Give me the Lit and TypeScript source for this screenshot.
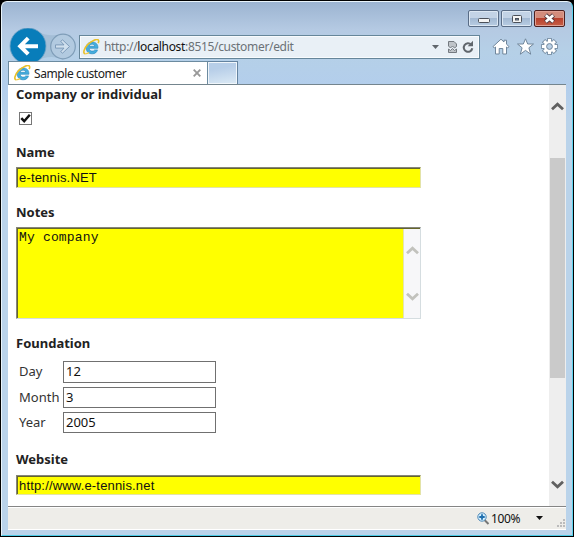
import { LitElement, html, css, svg } from "lit";
import { customElement } from "lit/decorators.js";

const ieLogo = html`<svg class="ie" width="17" height="16" viewBox="0 0 17 16">
  <path d="M14.900 9.300H6.200c.2 2 1.500 2.800 3 2.800 1.200 0 1.900-.4 2.400-1.200h2.900c-.7 2.600-2.700 3.900-5.300 3.900-3.500 0-6-2.200-6-5.900 0-3.600 2.600-6 6-6 3.500 0 6.100 2.400 5.700 6.400zM6.300 7.300h5.300C11.500 5.800 10.400 5.200 9 5.200S6.500 5.900 6.300 7.300z" fill="#45addd" stroke="#2384ba" stroke-width=".6"/>
  <path d="M2.300 14.700C-.4 14.800.8 9.600 4.600 5.600 8.600 1.500 14.300-.7 15.400 1.200c.5.800.3 1.900-.3 3" fill="none" stroke="#e8c02a" stroke-width="1.600"/>
  <path d="M2.300 14.600c1 .3 2.600-.2 3.900-1.100" fill="none" stroke="#f0cb45" stroke-width="1.300"/>
</svg>`;

const chevron = (up: boolean, color: string) => html`<svg width="13" height="9" viewBox="0 0 13 9">
  <path d=${up ? "M1 7.300 6.500 2.200 12 7.300" : "M1 1.700 6.500 6.800 12 1.700"} fill="none" stroke=${color} stroke-width="2.800"/>
</svg>`;

const teeth = [0, 45, 90, 135, 180, 225, 270, 315].map(
  (a) => svg`<rect x="7" y=".9" width="3" height="4" transform="rotate(${a} 8.5 8.5)"/>`,
);

@customElement("app-root")
export class AppRoot extends LitElement {
  static styles = css`
    :host {
      display: block;
      width: 574px;
      height: 537px;
      background: #000;
      overflow: hidden;
      font-family: "Noto Sans", "Open Sans", sans-serif;
      font-size: 12px;
      color: #1b1b1b;
    }
    * { box-sizing: border-box; }
    svg { display: block; flex: none; }
    .window {
      margin: 1px 1px 0 1px;
      height: 535px;
      border: 1px solid #e9f4fb;
      border-right-color: #5cd3ee;
      border-bottom-color: #4bcbe6;
      border-radius: 6px 6px 0 0;
      padding: 0 6px;
      background: linear-gradient(#9cb4d1 0, #b5cae3 28px, #b5d0e7 50px, #b3ceec 84px, #bad3ea 120px, #bad3ea 100%);
      display: flex;
      flex-direction: column;
    }
    .caption { height: 32px; padding: 8px 1px 0 0; display: flex; justify-content: flex-end; gap: 2px; flex: none; }
    .cap {
      width: 31px;
      height: 17px;
      border: 1px solid #596c86;
      border-radius: 2px;
      box-shadow: inset 0 0 0 1px #dce7f3;
      background: linear-gradient(#c3d3e6 45%, #a3b9d3 50%, #b8cde3);
      display: flex;
      align-items: center;
      justify-content: center;
    }
    .cap.close { border-color: #4d2020; box-shadow: inset 0 0 0 1px #dfa093; background: linear-gradient(#d38c7c 45%, #b8402d 50%, #c75f47); }
    .nav { height: 25px; display: flex; align-items: center; flex: none; }
    .arrows { width: 71px; height: 38px; }
    .address {
      width: 401px;
      height: 24px;
      border: 1px solid #66869a;
      box-shadow: inset 0 0 0 1px #f8fbfd;
      background: #e9f0f6;
      display: flex;
      align-items: center;
      padding-left: 3px;
      font-size: 12px;
      color: #6c7277;
    }
    .url { margin-left: 4px; width: 328px; white-space: nowrap; letter-spacing: -0.33px; }
    .url b { font-weight: 400; color: #111; }
    .tools { display: flex; margin-left: 12px; gap: 7px; align-items: center; }
    .tabs { height: 26px; padding-top: 2px; display: flex; flex: none; border-bottom: 1px solid #74858e; }
    .tab {
      width: 200px;
      border: 1px solid #6c8ba0;
      border-bottom: 0;
      height: 23px;
      background: #fff;
      display: flex;
      align-items: center;
      padding: 0 6px 0 5px;
      font-size: 12px;
      color: #222;
    }
    .tab .title { flex: 1; margin-left: 3px; white-space: nowrap; letter-spacing: -0.4px; }
    .newtab { width: 30px; height: 23px; border: 1px solid #6483a0; border-left: 0; border-bottom: 0; box-shadow: inset 0 0 0 1px #f0f6fb; background: linear-gradient(170deg, #b7cee8 30%, #dceaf5); }
    .page { height: 421px; background: #fff; display: flex; justify-content: space-between; flex: none; overflow: hidden; }
    .form { padding-left: 8px; }
    h2 { margin: 0; height: 18px; line-height: 18px; font-size: 13px; font-weight: 700; color: #222; white-space: nowrap; }
    .check { width: 13px; height: 13px; border: 1px solid #777; margin: 9px 0 18px 3px; }
    .field {
      width: 405px;
      height: 21px;
      background: #ff0;
      border: 1px solid;
      border-color: #85857a #e3e3a8 #e3e3a8 #85857a;
      box-shadow: inset 1px 1px 0 #66662a;
      padding: 1px 0 0 2px;
      margin: 6px 0 15px;
      line-height: 18px;
      font-family: "Liberation Sans", Arial, sans-serif;
      font-size: 13px;
      letter-spacing: 0.17px;
      color: #111;
      white-space: nowrap;
    }
    .field.area { height: 92px; display: flex; justify-content: space-between; font: 13px/17px "Liberation Mono", "Courier New", monospace; border-right-color: #d5dde0; border-bottom-color: #d5dde0; }
    .inner-scroll { width: 17px; background: #f7f7f9; border-left: 1px solid #e4e4b0; display: flex; flex-direction: column; align-items: center; padding-top: 17px; gap: 37px; }
    .date { margin-top: 9px; margin-bottom: 17px; display: flex; flex-direction: column; gap: 4px; }
    .row { display: flex; padding-left: 3px; height: 21px; font-size: 13px; line-height: 21px; color: #333; }
    .row:first-child { height: 22px; }
    .label { width: 44px; flex: none; white-space: nowrap; }
    .value { width: 153px; border: 1px solid #707070; padding-left: 2px; line-height: 18px; font-size: 13px; color: #111; }
    .field.web { margin: 7px 0 0; height: 20px; }
    .scroll { width: 17px; background: #eeeeee; display: flex; flex-direction: column; align-items: center; padding: 17px 0; }
    .thumb { width: 15px; height: 220px; background: #cacaca; margin: 47px 0 102px; }
    .status { height: 24px; border-top: 1px solid #858585; border-bottom: 1px solid #fff; box-shadow: inset 0 1px #fff; background: #eeede9; display: flex; justify-content: flex-end; align-items: center; color: #111; font-size: 12px; }
    .zoom { width: 45px; margin-left: 1px; letter-spacing: -0.4px; }
  `;

  render() {
    return html`<div class="window">
      <div class="caption">
        <div class="cap"><svg width="12" height="10"><rect x=".5" y="4.500" width="11" height="4" rx="1" fill="#f4f4f4" stroke="#4b5059"/></svg></div>
        <div class="cap"><svg width="12" height="10"><rect x="1.500" y="1.500" width="9" height="7" rx="1" fill="#f4f4f4" stroke="#4b5059"/><rect x="4.500" y="4.500" width="3" height="1.500" fill="#8099bb" stroke="#4b5059"/></svg></div>
        <div class="cap close"><svg width="13" height="11" viewBox="0 0 13 11"><path d="M2.500 2 10.500 9M10.500 2 2.500 9" stroke="#553b40" stroke-width="4.500"/><path d="M2.800 2.300 10.200 8.700M10.200 2.300 2.800 8.700" stroke="#fff" stroke-width="2.700"/></svg></div>
      </div>
      <div class="nav">
        <svg class="arrows" width="71" height="38" viewBox="0 0 71 38">
          <path d="M28 3C37 8 46 8 55 6L55 32C46 27 36 29 29 33Z" fill="#8ba9c4" opacity=".4"/>
          <circle cx="20" cy="18" r="18" fill="#087dba" stroke="#75a5c6" stroke-width=".8"/>
          <path d="M30 18.200H12.500M20.200 10.200 12.200 18.200 20.200 26.200" fill="none" stroke="#fff" stroke-width="4"/>
          <circle cx="55" cy="18.500" r="12.300" fill="#b2cae0" stroke="#7f9db8" stroke-width="1.200"/>
          <path d="M47.500 16.900H56L52.700 13.300 54.600 11.900 61.500 18.500 54.600 25.100 52.700 23.700 56 20.100H47.500Z" fill="#d0e0ee" stroke="#7795b4" stroke-width=".9"/>
        </svg>
        <div class="address">
          ${ieLogo}
          <span class="url">http://<b>localhost</b>:8515/customer/edit</span>
          <svg width="42" height="16" viewBox="0 0 42 16">
            <path d="M0 6H7L3.500 10Z" fill="#60666c"/>
            <path d="M16.500 7V2.500H22L24.500 5V7.500L22.500 9 20.500 7 18.500 9ZM16.500 10 18.500 11.500 20.500 9.500 22.500 11.500 24.500 10V13.500H16.500Z" fill="#bfc4c9" stroke="#747a80"/>
            <path d="M39.200 5.600A4.300 4.300 0 1 0 40.300 9.300" fill="none" stroke="#60666c" stroke-width="2"/><path d="M41 1.800V7.200H35.700Z" fill="#60666c"/>
          </svg>
        </div>
        <div class="tools">
          <svg width="18" height="17" viewBox="0 0 18 17"><path d="M1 8.600 9 1.200 12 4V2.200H14.500V6.200L17 8.600 15.700 10 14.500 9V16H10.800V10.500H7.200V16H3.500V9L2.300 10Z" fill="#fff" stroke="#70869b"/></svg>
          <svg width="17" height="17" viewBox="0 0 17 17"><path d="M8.500.8 10.700 6H16.500L11.900 9.800 13.700 16.200 8.500 12.400 3.300 16.200 5.100 9.800.5 6H6.300Z" fill="#fff" stroke="#70869b"/></svg>
          <svg width="17" height="17" viewBox="0 0 17 17"><g stroke="#70869b" stroke-width="1.600" fill="#fff">${teeth}<circle cx="8.500" cy="8.500" r="5.200"/></g><g fill="#fff">${teeth}</g><circle cx="8.500" cy="8.500" r="4.400" fill="none" stroke="#fff" stroke-width="2.200"/><circle cx="8.500" cy="8.500" r="2.900" fill="#b9d0e6" stroke="#70869b"/></svg>
        </div>
      </div>
      <div class="tabs">
        <div class="tab">${ieLogo}<span class="title">Sample customer</span><svg width="8" height="8" viewBox="0 0 8 8"><path d="M.7.7 7.300 7.300M7.300.7.7 7.300" stroke="#999" stroke-width="1.900"/></svg></div>
        <div class="newtab"></div>
      </div>
      <div class="page">
        <div class="form">
          <h2>Company or individual</h2>
          <div class="check"><svg width="11" height="11" viewBox="0 0 11 11"><path d="M1.300 5.200 4.200 8.200 9.800 1.800" fill="none" stroke="#111" stroke-width="2.500"/></svg></div>
          <h2>Name</h2>
          <div class="field">e-tennis.NET</div>
          <h2>Notes</h2>
          <div class="field area"><span>My company</span><div class="inner-scroll">${chevron(true, "#c2c2bd")}${chevron(false, "#c2c2bd")}</div></div>
          <h2>Foundation</h2>
          <div class="date">
            <div class="row"><span class="label">Day</span><div class="value">12</div></div>
            <div class="row"><span class="label">Month</span><div class="value">3</div></div>
            <div class="row"><span class="label">Year</span><div class="value">2005</div></div>
          </div>
          <h2>Website</h2>
          <div class="field web">http://www.e-tennis.net</div>
        </div>
        <div class="scroll">${chevron(true, "#606060")}<div class="thumb"></div>${chevron(false, "#606060")}</div>
      </div>
      <div class="status">
        <svg width="13" height="13" viewBox="0 0 13 13"><path d="M7.500 8 11.500 12" stroke="#777" stroke-width="2"/><circle cx="5" cy="5" r="4.200" fill="#d4efff" stroke="#4d87b5"/><path d="M5 2.300V7.700M2.300 5H7.700" stroke="#1f6fae" stroke-width="1.800"/></svg>
        <span class="zoom">100%</span>
        <svg width="30" height="20" viewBox="0 0 30 20"><path d="M0 8H7L3.500 12Z" fill="#111"/><path d="M27 11h2v2h-2zM24 14h2v2h-2zM27 14h2v2h-2zM21 17h2v2h-2zM24 17h2v2h-2zM27 17h2v2h-2z" fill="#bbb"/></svg>
      </div>
    </div>`;
  }
}
